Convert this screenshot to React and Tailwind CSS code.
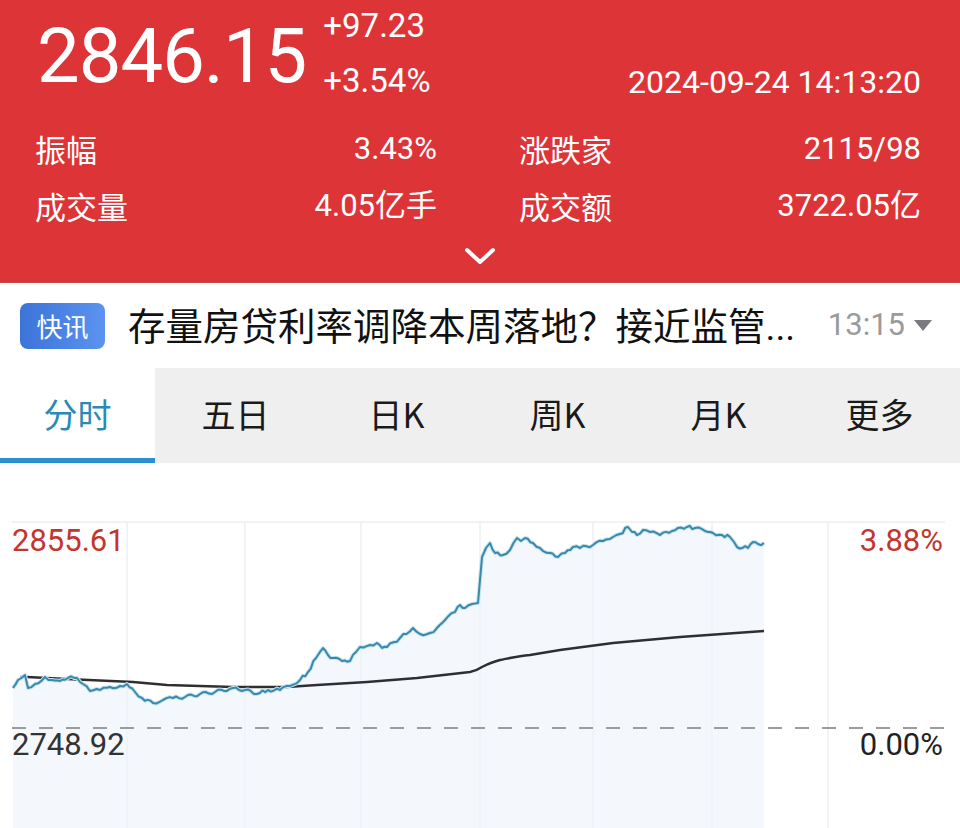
import React from 'react';

const num = { fontFamily: 'Roboto, "Noto Sans CJK SC", sans-serif' };
const cjk = { fontFamily: '"Noto Sans CJK SC", Roboto, sans-serif' };

const anchors = [
  [13, 688], [18, 680], [25, 675], [28, 688], [35, 684], [45, 677], [52, 680], [60, 681], [68, 678], [77, 678],
  [83, 684], [90, 691], [100, 690], [110, 687], [120, 686], [127, 684], [135, 692], [142, 698], [153, 703],
  [163, 700], [173, 698], [185, 697], [200, 694], [215, 692], [233, 688], [245, 690], [257, 694], [268, 690],
  [280, 690], [290, 686], [300, 680], [308, 672], [316, 658], [323, 648], [328, 655], [333, 658], [342, 661],
  [350, 661], [356, 652], [360, 647], [370, 645], [377, 643], [382, 648], [387, 647], [400, 638], [413, 628],
  [420, 634], [430, 633], [437, 628], [445, 620], [455, 612], [460, 605], [465, 608], [472, 604], [478, 603],
  [480, 580], [482, 557], [486, 548], [490, 543], [495, 553], [503, 555], [510, 550], [517, 538], [521, 541],
  [525, 538], [533, 543], [540, 548], [550, 553], [558, 557], [565, 553], [573, 547], [580, 548], [593, 545],
  [603, 541], [613, 537], [620, 534], [628, 527], [632, 532], [637, 535], [643, 530], [650, 532], [660, 535],
  [672, 531], [687, 527], [695, 528], [705, 531], [713, 533], [722, 535], [730, 537], [734, 542], [737, 547],
  [748, 548], [753, 542], [758, 544], [764, 543],
];

// add a little jitter between anchors so the line looks like tick data
const buildPrice = () => {
  const pts = [];
  for (let i = 0; i < anchors.length - 1; i++) {
    const [x0, y0] = anchors[i];
    const [x1, y1] = anchors[i + 1];
    const steps = Math.max(1, Math.round((x1 - x0) / 3));
    for (let s = 0; s < steps; s++) {
      const t = s / steps;
      const x = x0 + (x1 - x0) * t;
      const n = s === 0 ? 0 : Math.sin(x * 12.9898) * 1.6;
      pts.push([x, y0 + (y1 - y0) * t + n]);
    }
  }
  pts.push(anchors[anchors.length - 1]);
  return pts;
};

const price = buildPrice();
const priceStr = price.map(([x, y]) => `${x.toFixed(1)},${y.toFixed(1)}`).join(' ');
const fillStr = `${priceStr} 764,828 13,828`;

const avgPath =
  'M20,677 L27,677 L67,679 L133,682 L167,685 L233,687 L287,687 L317,685 L367,682 L417,678 L470,672 ' +
  'C476,671 479,669 482,667 C488,664 492,662 500,660 C510,658 518,656 530,655 L560,650 L613,643 L680,637 L764,631';

const gridX = [127, 245, 361, 480, 593, 712, 828];

const Stat = ({ label, value }) => (
  <div className="flex items-center justify-between">
    <span className="text-[31px]" style={cjk}>{label}</span>
    <span className="text-[31px]" style={num}>{value}</span>
  </div>
);

const tabs = ['五日', '日K', '周K', '月K', '更多'];

export default function App() {
  return (
    <div className="w-[960px] h-[828px] overflow-hidden bg-white">
      {/* header */}
      <div className="bg-[#dd3438] text-white h-[283px] border-b border-[#c9484a]">
        <div className="flex h-[121px] pl-[37px] pr-[39px]">
          <div className="pt-[18px] text-[76px] leading-[76px] tracking-[-1px]" style={num}>2846.15</div>
          <div className="ml-[17px] pt-[9px] flex flex-col text-[33px] leading-[33px]" style={num}>
            <span>+97.23</span>
            <span className="mt-[22px]">+3.54%</span>
          </div>
          <div className="ml-auto pt-[66px] text-[32px] leading-[32px]" style={num}>2024-09-24 14:13:20</div>
        </div>
        <div className="grid grid-cols-2 gap-x-[82px] pl-[35px] pr-[39px]">
          <div className="h-[57px] flex flex-col justify-center"><Stat label="振幅" value="3.43%" /></div>
          <div className="h-[57px] flex flex-col justify-center"><Stat label="涨跌家" value="2115/98" /></div>
          <div className="h-[57px] flex flex-col justify-center"><Stat label="成交量" value="4.05亿手" /></div>
          <div className="h-[57px] flex flex-col justify-center"><Stat label="成交额" value="3722.05亿" /></div>
        </div>
        <div className="flex justify-center pt-[12px]">
          <svg width="32" height="18" viewBox="0 0 32 18">
            <path d="M3 3 L16 15 L29 3" fill="none" stroke="white" strokeWidth="4" strokeLinecap="round" strokeLinejoin="round" />
          </svg>
        </div>
      </div>

      {/* news */}
      <div className="flex items-center h-[85px] pl-[20px] pr-[28px]">
        <div className="w-[85px] h-[46px] rounded-[8px] bg-gradient-to-r from-[#3c74d8] to-[#5b93f0] text-white text-[26px] flex items-center justify-center" style={cjk}>快讯</div>
        <div className="ml-[23px] text-[37.5px] text-[#111] leading-none whitespace-nowrap" style={cjk}>
          存量房贷利率调降本周落地？接近监管<span style={num}>...</span>
        </div>
        <div className="ml-auto flex items-center text-[31px] text-[#9a9a9a]" style={num}>
          13:15
          <svg className="ml-[9px]" width="18" height="11" viewBox="0 0 18 11">
            <path d="M0 0 H18 L9 11 Z" fill="#7a7a80" />
          </svg>
        </div>
      </div>

      {/* tabs */}
      <div className="flex h-[95px] bg-[#efefef]" style={cjk}>
        <div className="w-[155px] bg-white flex flex-col">
          <div className="flex-1 flex items-center justify-center text-[34px] text-[#2a8ab6]">分时</div>
          <div className="h-[5px] bg-[#2b8fd2]" />
        </div>
        {tabs.map((t) => (
          <div key={t} className="flex-1 flex items-center justify-center text-[34px] text-[#1a1a1a] pb-[5px]">{t}</div>
        ))}
      </div>

      {/* chart */}
      <div className="relative h-[365px]">
        <svg className="block" width="960" height="365" viewBox="0 463 960 365">
          <line x1="12" y1="522" x2="945" y2="522" stroke="#eceef1" strokeWidth="1.5" />
          {gridX.map((x) => (
            <line key={x} x1={x} y1="522" x2={x} y2="828" stroke="#edf0f4" strokeWidth="1.5" />
          ))}
          <polygon points={fillStr} fill="#eef5fc" fillOpacity="0.65" />
          <line x1="12" y1="728" x2="945" y2="728" stroke="#9c9c9c" strokeWidth="2" strokeDasharray="14 13" />
          <path d={avgPath} fill="none" stroke="#2f2f33" strokeWidth="2.5" strokeLinejoin="round" />
          <polyline points={priceStr} fill="none" stroke="#c6e4f1" strokeWidth="4" strokeLinejoin="round" />
          <polyline points={priceStr} fill="none" stroke="#3a88aa" strokeWidth="2" strokeLinejoin="round" />
        </svg>
        <div className="absolute left-[12px] top-[62px] text-[31px] leading-[31px] text-[#c3352f]" style={num}>2855.61</div>
        <div className="absolute right-[17px] top-[62px] text-[31px] leading-[31px] text-[#c3352f]" style={num}>3.88%</div>
        <div className="absolute left-[12px] top-[266px] text-[31px] leading-[31px] text-[#333]" style={num}>2748.92</div>
        <div className="absolute right-[17px] top-[266px] text-[31px] leading-[31px] text-[#222]" style={num}>0.00%</div>
      </div>
    </div>
  );
}
